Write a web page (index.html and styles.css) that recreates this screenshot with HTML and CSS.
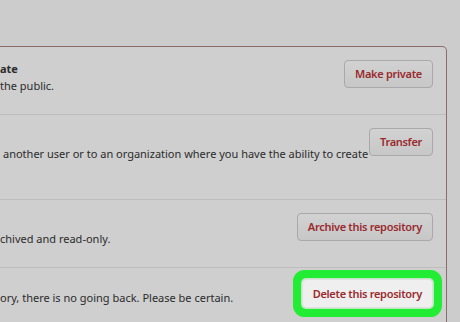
FILE: index.html
```html
<!DOCTYPE html>
<html>
<head>
<meta charset="utf-8">
<link rel="stylesheet" href="styles.css">
</head>
<body>
<div class="page">
  <div class="danger-box">
    <div class="row">
      <div class="info">
        <div class="title">ate</div>
        <div class="desc">the public.</div>
      </div>
      <button class="btn">Make private</button>
    </div>
    <div class="row">
      <div class="info">
        <div class="title">&nbsp;</div>
        <div class="desc indent">another user or to an organization where you have the ability to create</div>
        <div class="desc">&nbsp;</div>
      </div>
      <button class="btn">Transfer</button>
    </div>
    <div class="row">
      <div class="info">
        <div class="title">&nbsp;</div>
        <div class="desc">chived and read-only.</div>
      </div>
      <button class="btn">Archive this repository</button>
    </div>
    <div class="row row-last">
      <div class="info">
        <div class="title">&nbsp;</div>
        <div class="desc">ory, there is no going back. Please be certain.</div>
      </div>
      <button class="btn btn-highlight">Delete this repository</button>
    </div>
  </div>
</div>
</body>
</html>
```

FILE: styles.css
```css
html, body {
  margin: 0;
  padding: 0;
  background: #cccccc;
  overflow: hidden;
}
.page {
  width: 460px;
  height: 322px;
  overflow: hidden;
  padding-top: 46px;
  box-sizing: border-box;
  font-family: "Noto Sans", "Open Sans", sans-serif;
  color: #2b2b2b;
}
.danger-box {
  width: 447px;
  box-sizing: border-box;
  border: 1px solid #8d6c6c;
  border-left: none;
  border-radius: 0 5px 0 0;
  background: #cfcfcf;
}
.row {
  display: flex;
  align-items: flex-start;
  justify-content: space-between;
  padding: 13px 13px 20px 0;
  border-top: 1px solid #bdbdbd;
}
.row:first-child {
  border-top: none;
}
.row-last {
  padding-top: 4px;
  padding-bottom: 16px;
}
.info {
  flex: 1;
  min-width: 0;
}
.title {
  font-size: 11px;
  font-weight: 700;
  line-height: 17px;
  white-space: nowrap;
}
.desc {
  font-size: 11px;
  line-height: 17px;
  white-space: nowrap;
}
.indent {
  padding-left: 3px;
}
.btn {
  flex: none;
  font-family: "Noto Sans", "Open Sans", sans-serif;
  font-size: 11px;
  font-weight: 600;
  letter-spacing: -0.3px;
  color: #992a2e;
  background: linear-gradient(#d2d2d2, #c7c7c7);
  border: 1px solid #a9a9a9;
  border-radius: 4px;
  height: 28px;
  padding: 0 10px;
  margin-left: 10px;
  line-height: 26px;
  white-space: nowrap;
}
.btn-highlight {
  margin-top: 7px;
  height: 29px;
  background: #efefef;
  border-color: #e0e0e0;
  box-shadow: 0 0 0 1px #bde9bf, 0 0 0 9px #22ec33;
}
```
